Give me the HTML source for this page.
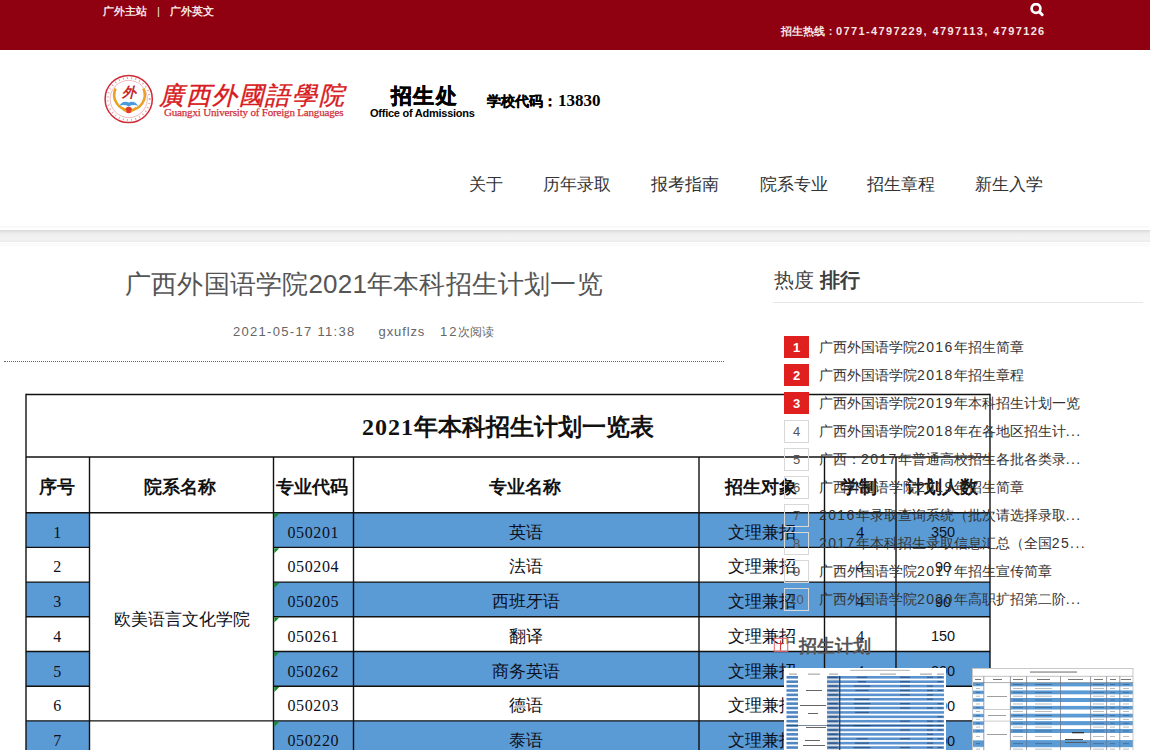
<!DOCTYPE html>
<html><head><meta charset="utf-8">
<style>
*{margin:0;padding:0;box-sizing:border-box}
html,body{width:1150px;height:750px;overflow:hidden;background:#fff;font-family:"Liberation Sans",sans-serif;color:#333}
.abs{position:absolute;white-space:nowrap}
#top{position:absolute;left:0;top:0;width:1150px;height:50px;background:#8f0010}
#band{position:absolute;left:0;top:230px;width:1150px;height:12px;background:linear-gradient(#dadada,#eeeeee 30%,#f3f3f3 75%,#ebebeb)}
#band:before{content:'';position:absolute;left:0;top:-4px;width:100%;height:2px;background:#fafafa}
#band:after{content:'';position:absolute;left:0;top:13px;width:100%;height:4px;background:linear-gradient(#fafafa,#fdfdfd)}
.nav{position:absolute;top:173.5px;font-size:17px;color:#333;line-height:22px;white-space:nowrap}
.rk{position:absolute;left:784px;width:25px;height:23px;border:1px solid #d8d8d8;font-size:13px;line-height:21px;text-align:center;color:#555}
.rk.red{background:#e01f1f;border-color:#e01f1f;color:#fff;height:22px;font-weight:bold}
.it{position:absolute;left:819px;height:22px;line-height:22px;font-size:14px;color:#333;white-space:nowrap}
.dg{letter-spacing:1.4px}
</style></head><body>
<div id="top"></div>
<div class="abs" style="left:103px;top:3.5px;font-size:11.3px;line-height:14px;color:#f4e6e6;font-weight:bold">广外主站<span style="display:inline-block;width:23px;text-align:center;font-weight:normal">|</span>广外英文</div>
<div class="abs" style="left:781px;top:24px;font-size:11px;line-height:14px;color:#f4e6e6;font-weight:bold"><span style="letter-spacing:0">招生热线</span><span style="letter-spacing:0;display:inline-block;width:11px;text-align:center">:</span><span style="letter-spacing:1.38px">0771-4797229, 4797113, 4797126</span></div>
<div id="band"></div>
<div class="nav" style="left:469px">关于</div>
<div class="nav" style="left:543px">历年录取</div>
<div class="nav" style="left:651px">报考指南</div>
<div class="nav" style="left:760px">院系专业</div>
<div class="nav" style="left:867px">招生章程</div>
<div class="nav" style="left:975px">新生入学</div>
<div class="abs" style="left:125px;top:267px;font-size:26px;line-height:34px;color:#555;letter-spacing:0.2px">广西外国语学院2021年本科招生计划一览</div>
<div class="abs" style="left:233px;top:322.5px;font-size:13px;line-height:18px;color:#666;letter-spacing:1.3px">2021-05-17 11:38</div>
<div class="abs" style="left:378.5px;top:322.5px;font-size:13px;line-height:18px;color:#666;letter-spacing:0.9px">gxuflzs</div>
<div class="abs" style="left:440px;top:322.5px;font-size:13px;line-height:18px;color:#666"><span style="letter-spacing:2px">12</span><span style="font-size:12px">次阅读</span></div>
<div class="abs" style="left:4px;top:361px;width:720px;height:1px;border-top:1px dotted #666"></div>
<svg class="abs" style="left:1029px;top:3px" width="16" height="14" viewBox="0 0 16 14"><circle cx="7" cy="5.5" r="4.4" fill="none" stroke="#fff" stroke-width="2.7"/><path d="M10.6 9.1l2.6 2.6" stroke="#fff" stroke-width="3" stroke-linecap="round"/></svg>
<svg class="abs" style="left:100px;top:70px" width="60" height="60" viewBox="100 70 60 60">
<circle cx="128.7" cy="99" r="23.6" fill="#fff" stroke="#cf2a35" stroke-width="1.5"/>
<circle cx="128.7" cy="99" r="18.6" fill="none" stroke="#e58a90" stroke-width="0.6"/>
<circle cx="128.7" cy="99" r="21" fill="none" stroke="#e8a0a6" stroke-width="2" stroke-dasharray="1 3.2"/>
<path d="M115.6 88.5 A15.3 15.3 0 1 0 143.4 88.5" fill="none" stroke="#e9a227" stroke-width="2.6"/>
<text x="129" y="97" text-anchor="middle" font-family="Liberation Serif" font-weight="bold" font-style="italic" font-size="14" fill="#c8282a">外</text>
<path d="M119 106 q4 -6 9.7 -3.5 q5.7 -2.5 9.7 3.5 q-5 -2 -9.7 0.5 q-4.7 -2.5 -9.7 -0.5z" fill="#4a9ae0"/>
<circle cx="128.7" cy="110" r="3.2" fill="#e03a2a"/>
<path d="M121.5 107.5 q3 4 5 3.5 M135.9 107.5 q-3 4 -5 3.5" stroke="#e8a020" stroke-width="1.6" fill="none"/>
</svg>
<div class="abs" style="left:159px;top:76.5px;font-size:25px;line-height:36px;color:#d81a22;font-weight:normal;font-style:italic;letter-spacing:1.6px;-webkit-text-stroke:0.4px #d81a22">廣西外國語學院</div>
<div class="abs" style="left:164px;top:106px;font-size:11px;line-height:13px;color:#d0303a;font-family:'Liberation Serif',serif;letter-spacing:-0.18px;-webkit-text-stroke:0.25px #d0303a">Guangxi University of Foreign Languages</div>
<div class="abs" style="left:391px;top:81.5px;font-size:21px;line-height:28px;color:#000;font-weight:bold;letter-spacing:1.3px;-webkit-text-stroke:0.5px #000">招生处</div>
<div class="abs" style="left:370px;top:107px;font-size:11px;line-height:13px;color:#000;font-weight:bold;letter-spacing:-0.25px">Office of Admissions</div>
<div class="abs" style="left:487px;top:91px;font-size:14px;line-height:20px;color:#000;font-weight:bold;-webkit-text-stroke:0.3px #000">学校代码：</div>
<div class="abs" style="left:558px;top:90.5px;font-size:17px;line-height:20px;color:#000;font-weight:bold;font-family:'Liberation Serif',serif">13830</div>
<svg class="abs" style="left:0;top:0" width="1150" height="750" viewBox="0 0 1150 750">
<rect x="26" y="512.7" width="63.5" height="34.7" fill="#5b9bd5"/>
<rect x="273.5" y="512.7" width="716.5" height="34.7" fill="#5b9bd5"/>
<rect x="26" y="582.1" width="63.5" height="34.7" fill="#5b9bd5"/>
<rect x="273.5" y="582.1" width="716.5" height="34.7" fill="#5b9bd5"/>
<rect x="26" y="651.5" width="63.5" height="34.7" fill="#5b9bd5"/>
<rect x="273.5" y="651.5" width="716.5" height="34.7" fill="#5b9bd5"/>
<rect x="26" y="720.9" width="63.5" height="34.7" fill="#5b9bd5"/>
<rect x="273.5" y="720.9" width="716.5" height="34.7" fill="#5b9bd5"/>
<line x1="26" y1="394.5" x2="990" y2="394.5" stroke="#111" stroke-width="1.4"/>
<line x1="26" y1="457.0" x2="990" y2="457.0" stroke="#111" stroke-width="1.4"/>
<line x1="26" y1="512.7" x2="990" y2="512.7" stroke="#111" stroke-width="1.4"/>
<line x1="26" y1="547.4" x2="89.5" y2="547.4" stroke="#111" stroke-width="1.4"/>
<line x1="273.5" y1="547.4" x2="990" y2="547.4" stroke="#111" stroke-width="1.4"/>
<line x1="26" y1="582.1" x2="89.5" y2="582.1" stroke="#111" stroke-width="1.4"/>
<line x1="273.5" y1="582.1" x2="990" y2="582.1" stroke="#111" stroke-width="1.4"/>
<line x1="26" y1="616.8" x2="89.5" y2="616.8" stroke="#111" stroke-width="1.4"/>
<line x1="273.5" y1="616.8" x2="990" y2="616.8" stroke="#111" stroke-width="1.4"/>
<line x1="26" y1="651.5" x2="89.5" y2="651.5" stroke="#111" stroke-width="1.4"/>
<line x1="273.5" y1="651.5" x2="990" y2="651.5" stroke="#111" stroke-width="1.4"/>
<line x1="26" y1="686.2" x2="89.5" y2="686.2" stroke="#111" stroke-width="1.4"/>
<line x1="273.5" y1="686.2" x2="990" y2="686.2" stroke="#111" stroke-width="1.4"/>
<line x1="26" y1="720.9" x2="990" y2="720.9" stroke="#111" stroke-width="1.4"/>
<line x1="26" y1="755.6" x2="89.5" y2="755.6" stroke="#111" stroke-width="1.4"/>
<line x1="273.5" y1="755.6" x2="990" y2="755.6" stroke="#111" stroke-width="1.4"/>
<line x1="26" y1="393.7" x2="26" y2="760.0" stroke="#111" stroke-width="1.4"/>
<line x1="990" y1="393.7" x2="990" y2="760.0" stroke="#111" stroke-width="1.4"/>
<line x1="89.5" y1="457.0" x2="89.5" y2="760.0" stroke="#111" stroke-width="1.4"/>
<line x1="273.5" y1="457.0" x2="273.5" y2="760.0" stroke="#111" stroke-width="1.4"/>
<line x1="353.5" y1="457.0" x2="353.5" y2="760.0" stroke="#111" stroke-width="1.4"/>
<line x1="699" y1="457.0" x2="699" y2="760.0" stroke="#111" stroke-width="1.4"/>
<line x1="824.5" y1="457.0" x2="824.5" y2="760.0" stroke="#111" stroke-width="1.4"/>
<line x1="896" y1="457.0" x2="896" y2="760.0" stroke="#111" stroke-width="1.4"/>
<path d="M274.3 513.5h5l-5 5z" fill="#1a8a2a"/>
<path d="M274.3 548.2h5l-5 5z" fill="#1a8a2a"/>
<path d="M274.3 582.9h5l-5 5z" fill="#1a8a2a"/>
<path d="M274.3 617.6h5l-5 5z" fill="#1a8a2a"/>
<path d="M274.3 652.3h5l-5 5z" fill="#1a8a2a"/>
<path d="M274.3 687.0h5l-5 5z" fill="#1a8a2a"/>
<path d="M274.3 721.7h5l-5 5z" fill="#1a8a2a"/>
<text x="508" y="434.8" text-anchor="middle" font-family="Liberation Serif" font-weight="bold" font-size="24" fill="#111"><tspan letter-spacing="1">2021</tspan>年本科招生计划一览表</text>
<text x="56.55" y="492.8" text-anchor="middle" font-family="Liberation Sans" font-weight="bold" font-size="17.6" fill="#111">序号</text>
<text x="180.3" y="492.8" text-anchor="middle" font-family="Liberation Sans" font-weight="bold" font-size="17.6" fill="#111">院系名称</text>
<text x="312.3" y="492.8" text-anchor="middle" font-family="Liberation Sans" font-weight="bold" font-size="17.6" fill="#111">专业代码</text>
<text x="525.05" y="492.8" text-anchor="middle" font-family="Liberation Sans" font-weight="bold" font-size="17.6" fill="#111">专业名称</text>
<text x="760.55" y="492.8" text-anchor="middle" font-family="Liberation Sans" font-weight="bold" font-size="17.6" fill="#111">招生对象</text>
<text x="859.05" y="492.8" text-anchor="middle" font-family="Liberation Sans" font-weight="bold" font-size="17.6" fill="#111">学制</text>
<text x="941.8" y="492.8" text-anchor="middle" font-family="Liberation Sans" font-weight="bold" font-size="17.6" fill="#111">计划人数</text>
<text x="57.25" y="537.7" text-anchor="middle" font-family="Liberation Serif" font-size="16" fill="#0d1020">1</text>
<text x="287.5" y="537.7" font-family="Liberation Serif" font-size="16" letter-spacing="0.6" fill="#0d1020">050201</text>
<text x="525.75" y="537.7" text-anchor="middle" font-family="Liberation Sans" font-size="17" fill="#0d1020">英语</text>
<text x="761.75" y="537.7" text-anchor="middle" font-family="Liberation Sans" font-size="17" fill="#0d1020">文理兼招</text>
<text x="860.25" y="537.7" text-anchor="middle" font-family="Liberation Serif" font-size="16" fill="#0d1020">4</text>
<text x="943.0" y="537.3" text-anchor="middle" font-family="Liberation Sans" font-size="14.5" fill="#0d1020">350</text>
<text x="57.25" y="572.4" text-anchor="middle" font-family="Liberation Serif" font-size="16" fill="#0d1020">2</text>
<text x="287.5" y="572.4" font-family="Liberation Serif" font-size="16" letter-spacing="0.6" fill="#0d1020">050204</text>
<text x="525.75" y="572.4" text-anchor="middle" font-family="Liberation Sans" font-size="17" fill="#0d1020">法语</text>
<text x="761.75" y="572.4" text-anchor="middle" font-family="Liberation Sans" font-size="17" fill="#0d1020">文理兼招</text>
<text x="860.25" y="572.4" text-anchor="middle" font-family="Liberation Serif" font-size="16" fill="#0d1020">4</text>
<text x="943.0" y="572.0" text-anchor="middle" font-family="Liberation Sans" font-size="14.5" fill="#0d1020">90</text>
<text x="57.25" y="607.1" text-anchor="middle" font-family="Liberation Serif" font-size="16" fill="#0d1020">3</text>
<text x="287.5" y="607.1" font-family="Liberation Serif" font-size="16" letter-spacing="0.6" fill="#0d1020">050205</text>
<text x="525.75" y="607.1" text-anchor="middle" font-family="Liberation Sans" font-size="17" fill="#0d1020">西班牙语</text>
<text x="761.75" y="607.1" text-anchor="middle" font-family="Liberation Sans" font-size="17" fill="#0d1020">文理兼招</text>
<text x="860.25" y="607.1" text-anchor="middle" font-family="Liberation Serif" font-size="16" fill="#0d1020">4</text>
<text x="943.0" y="606.7" text-anchor="middle" font-family="Liberation Sans" font-size="14.5" fill="#0d1020">90</text>
<text x="57.25" y="641.8" text-anchor="middle" font-family="Liberation Serif" font-size="16" fill="#0d1020">4</text>
<text x="287.5" y="641.8" font-family="Liberation Serif" font-size="16" letter-spacing="0.6" fill="#0d1020">050261</text>
<text x="525.75" y="641.8" text-anchor="middle" font-family="Liberation Sans" font-size="17" fill="#0d1020">翻译</text>
<text x="761.75" y="641.8" text-anchor="middle" font-family="Liberation Sans" font-size="17" fill="#0d1020">文理兼招</text>
<text x="860.25" y="641.8" text-anchor="middle" font-family="Liberation Serif" font-size="16" fill="#0d1020">4</text>
<text x="943.0" y="641.4" text-anchor="middle" font-family="Liberation Sans" font-size="14.5" fill="#0d1020">150</text>
<text x="57.25" y="676.5" text-anchor="middle" font-family="Liberation Serif" font-size="16" fill="#0d1020">5</text>
<text x="287.5" y="676.5" font-family="Liberation Serif" font-size="16" letter-spacing="0.6" fill="#0d1020">050262</text>
<text x="525.75" y="676.5" text-anchor="middle" font-family="Liberation Sans" font-size="17" fill="#0d1020">商务英语</text>
<text x="761.75" y="676.5" text-anchor="middle" font-family="Liberation Sans" font-size="17" fill="#0d1020">文理兼招</text>
<text x="860.25" y="676.5" text-anchor="middle" font-family="Liberation Serif" font-size="16" fill="#0d1020">4</text>
<text x="943.0" y="676.1" text-anchor="middle" font-family="Liberation Sans" font-size="14.5" fill="#0d1020">200</text>
<text x="57.25" y="711.2" text-anchor="middle" font-family="Liberation Serif" font-size="16" fill="#0d1020">6</text>
<text x="287.5" y="711.2" font-family="Liberation Serif" font-size="16" letter-spacing="0.6" fill="#0d1020">050203</text>
<text x="525.75" y="711.2" text-anchor="middle" font-family="Liberation Sans" font-size="17" fill="#0d1020">德语</text>
<text x="761.75" y="711.2" text-anchor="middle" font-family="Liberation Sans" font-size="17" fill="#0d1020">文理兼招</text>
<text x="860.25" y="711.2" text-anchor="middle" font-family="Liberation Serif" font-size="16" fill="#0d1020">4</text>
<text x="943.0" y="710.8" text-anchor="middle" font-family="Liberation Sans" font-size="14.5" fill="#0d1020">100</text>
<text x="57.25" y="745.9" text-anchor="middle" font-family="Liberation Serif" font-size="16" fill="#0d1020">7</text>
<text x="287.5" y="745.9" font-family="Liberation Serif" font-size="16" letter-spacing="0.6" fill="#0d1020">050220</text>
<text x="525.75" y="745.9" text-anchor="middle" font-family="Liberation Sans" font-size="17" fill="#0d1020">泰语</text>
<text x="761.75" y="745.9" text-anchor="middle" font-family="Liberation Sans" font-size="17" fill="#0d1020">文理兼招</text>
<text x="860.25" y="745.9" text-anchor="middle" font-family="Liberation Serif" font-size="16" fill="#0d1020">4</text>
<text x="943.0" y="745.5" text-anchor="middle" font-family="Liberation Sans" font-size="14.5" fill="#0d1020">100</text>
<text x="181.5" y="624.8" text-anchor="middle" font-family="Liberation Sans" font-size="17" fill="#0d1020">欧美语言文化学院</text>
</svg>
<div class="abs" style="left:774px;top:266px;font-size:20px;line-height:28px;color:#444">热度 <b style="color:#3e3e3e">排行</b></div>
<div class="abs" style="left:773px;top:302px;width:370px;height:1px;background:#e6e6e6"></div>
<div class="rk red" style="top:336px">1</div>
<div class="it" style="top:336px">广西外国语学院<span class="dg">2016</span>年招生简章</div>
<div class="rk red" style="top:364px">2</div>
<div class="it" style="top:364px">广西外国语学院<span class="dg">2018</span>年招生章程</div>
<div class="rk red" style="top:392px">3</div>
<div class="it" style="top:392px">广西外国语学院<span class="dg">2019</span>年本科招生计划一览</div>
<div class="rk" style="top:420px">4</div>
<div class="it" style="top:420px">广西外国语学院<span class="dg">2018</span>年在各地区招生计<span class="dg">...</span></div>
<div class="rk" style="top:448px">5</div>
<div class="it" style="top:448px">广西：<span class="dg">2017</span>年普通高校招生各批各类录<span class="dg">...</span></div>
<div class="rk" style="top:476px">6</div>
<div class="it" style="top:476px">广西外国语学院<span class="dg">2019</span>年招生简章</div>
<div class="rk" style="top:504px">7</div>
<div class="it" style="top:504px"><span class="dg">2016</span>年录取查询系统（批次请选择录取<span class="dg">...</span></div>
<div class="rk" style="top:532px">8</div>
<div class="it" style="top:532px"><span class="dg">2017</span>年本科招生录取信息汇总（全国<span class="dg">25...</span></div>
<div class="rk" style="top:560px">9</div>
<div class="it" style="top:560px">广西外国语学院<span class="dg">2017</span>年招生宣传简章</div>
<div class="rk" style="top:588px">10</div>
<div class="it" style="top:588px">广西外国语学院<span class="dg">2020</span>年高职扩招第二阶<span class="dg">...</span></div>
<svg class="abs" style="left:773px;top:637px" width="16" height="16" viewBox="0 0 16 16"><rect x="1.3" y="1.3" width="13.4" height="13" fill="none" stroke="#e66a70" stroke-width="1.1"/><path d="M7.5 3.5v10M4 6.5h7" stroke="#d83838" stroke-width="1.1"/></svg>
<div class="abs" style="left:799px;top:634px;font-size:18px;line-height:24px;color:#555;font-weight:bold">招生计划</div>
<svg class="abs" style="left:784px;top:668px" width="162" height="82" viewBox="784 668 162 82">
<rect x="784" y="668" width="162" height="82" fill="#fff"/>
<rect x="850" y="669.8" width="60" height="1.1" fill="#bbb"/>
<rect x="789" y="673.6" width="8" height="1" fill="#999"/>
<rect x="808" y="673.6" width="12" height="1" fill="#999"/>
<rect x="829" y="673.6" width="9" height="1" fill="#999"/>
<rect x="880" y="673.6" width="16" height="1" fill="#999"/>
<rect x="920" y="673.6" width="12" height="1" fill="#999"/>
<rect x="937" y="673.6" width="7" height="1" fill="#999"/>
<rect x="786.5" y="676.00" width="11.5" height="2.6" fill="#4f86c2"/>
<rect x="827" y="676.00" width="117" height="2.6" fill="#5a92cf"/>
<rect x="828.5" y="676.70" width="9.0" height="1.2" fill="#1c3050" opacity="0.55"/>
<rect x="856.8" y="676.70" width="10.4" height="1.2" fill="#1c3050" opacity="0.55"/>
<rect x="900.0" y="676.70" width="10.0" height="1.2" fill="#1c3050" opacity="0.55"/>
<rect x="927.0" y="676.70" width="6.0" height="1.2" fill="#1c3050" opacity="0.55"/>
<rect x="937.5" y="676.70" width="5.0" height="1.2" fill="#1c3050" opacity="0.55"/>
<rect x="786.5" y="680.39" width="11.5" height="2.6" fill="#4f86c2"/>
<rect x="827" y="680.39" width="117" height="2.6" fill="#5a92cf"/>
<rect x="857.9" y="681.09" width="8.1" height="1.2" fill="#1c3050" opacity="0.55"/>
<rect x="900.0" y="681.09" width="10.0" height="1.2" fill="#1c3050" opacity="0.55"/>
<rect x="937.5" y="681.09" width="5.0" height="1.2" fill="#1c3050" opacity="0.55"/>
<rect x="786.5" y="684.78" width="11.5" height="2.6" fill="#4f86c2"/>
<rect x="827" y="684.78" width="117" height="2.6" fill="#5a92cf"/>
<rect x="828.5" y="685.48" width="9.0" height="1.2" fill="#1c3050" opacity="0.55"/>
<rect x="853.8" y="685.48" width="16.4" height="1.2" fill="#1c3050" opacity="0.55"/>
<rect x="900.0" y="685.48" width="10.0" height="1.2" fill="#1c3050" opacity="0.55"/>
<rect x="927.0" y="685.48" width="6.0" height="1.2" fill="#1c3050" opacity="0.55"/>
<rect x="786.5" y="689.17" width="11.5" height="2.6" fill="#4f86c2"/>
<rect x="827" y="689.17" width="117" height="2.6" fill="#5a92cf"/>
<rect x="828.5" y="689.87" width="9.0" height="1.2" fill="#1c3050" opacity="0.55"/>
<rect x="855.4" y="689.87" width="13.2" height="1.2" fill="#1c3050" opacity="0.55"/>
<rect x="900.0" y="689.87" width="10.0" height="1.2" fill="#1c3050" opacity="0.55"/>
<rect x="927.0" y="689.87" width="6.0" height="1.2" fill="#1c3050" opacity="0.55"/>
<rect x="937.5" y="689.87" width="5.0" height="1.2" fill="#1c3050" opacity="0.55"/>
<rect x="786.5" y="693.56" width="11.5" height="2.6" fill="#4f86c2"/>
<rect x="827" y="693.56" width="117" height="2.6" fill="#5a92cf"/>
<rect x="828.5" y="694.26" width="9.0" height="1.2" fill="#1c3050" opacity="0.55"/>
<rect x="900.0" y="694.26" width="10.0" height="1.2" fill="#1c3050" opacity="0.55"/>
<rect x="927.0" y="694.26" width="6.0" height="1.2" fill="#1c3050" opacity="0.55"/>
<rect x="786.5" y="697.95" width="11.5" height="2.6" fill="#4f86c2"/>
<rect x="827" y="697.95" width="117" height="2.6" fill="#5a92cf"/>
<rect x="854.4" y="698.65" width="15.1" height="1.2" fill="#1c3050" opacity="0.55"/>
<rect x="927.0" y="698.65" width="6.0" height="1.2" fill="#1c3050" opacity="0.55"/>
<rect x="786.5" y="702.34" width="11.5" height="2.6" fill="#4f86c2"/>
<rect x="827" y="702.34" width="117" height="2.6" fill="#5a92cf"/>
<rect x="828.5" y="703.04" width="9.0" height="1.2" fill="#1c3050" opacity="0.55"/>
<rect x="853.6" y="703.04" width="16.8" height="1.2" fill="#1c3050" opacity="0.55"/>
<rect x="900.0" y="703.04" width="10.0" height="1.2" fill="#1c3050" opacity="0.55"/>
<rect x="937.5" y="703.04" width="5.0" height="1.2" fill="#1c3050" opacity="0.55"/>
<rect x="786.5" y="706.73" width="11.5" height="2.6" fill="#4f86c2"/>
<rect x="827" y="706.73" width="117" height="2.6" fill="#5a92cf"/>
<rect x="828.5" y="707.43" width="9.0" height="1.2" fill="#1c3050" opacity="0.55"/>
<rect x="854.9" y="707.43" width="14.3" height="1.2" fill="#1c3050" opacity="0.55"/>
<rect x="900.0" y="707.43" width="10.0" height="1.2" fill="#1c3050" opacity="0.55"/>
<rect x="927.0" y="707.43" width="6.0" height="1.2" fill="#1c3050" opacity="0.55"/>
<rect x="937.5" y="707.43" width="5.0" height="1.2" fill="#1c3050" opacity="0.55"/>
<rect x="786.5" y="711.12" width="11.5" height="2.6" fill="#4f86c2"/>
<rect x="827" y="711.12" width="117" height="2.6" fill="#5a92cf"/>
<rect x="855.1" y="711.82" width="13.8" height="1.2" fill="#1c3050" opacity="0.55"/>
<rect x="786.5" y="715.51" width="11.5" height="2.6" fill="#4f86c2"/>
<rect x="827" y="715.51" width="117" height="2.6" fill="#5a92cf"/>
<rect x="828.5" y="716.21" width="9.0" height="1.2" fill="#1c3050" opacity="0.55"/>
<rect x="937.5" y="716.21" width="5.0" height="1.2" fill="#1c3050" opacity="0.55"/>
<rect x="786.5" y="719.90" width="11.5" height="2.6" fill="#4f86c2"/>
<rect x="827" y="719.90" width="117" height="2.6" fill="#5a92cf"/>
<rect x="828.5" y="720.60" width="9.0" height="1.2" fill="#1c3050" opacity="0.55"/>
<rect x="900.0" y="720.60" width="10.0" height="1.2" fill="#1c3050" opacity="0.55"/>
<rect x="927.0" y="720.60" width="6.0" height="1.2" fill="#1c3050" opacity="0.55"/>
<rect x="937.5" y="720.60" width="5.0" height="1.2" fill="#1c3050" opacity="0.55"/>
<rect x="786.5" y="724.29" width="11.5" height="2.6" fill="#4f86c2"/>
<rect x="827" y="724.29" width="117" height="2.6" fill="#5a92cf"/>
<rect x="853.7" y="724.99" width="16.5" height="1.2" fill="#1c3050" opacity="0.55"/>
<rect x="927.0" y="724.99" width="6.0" height="1.2" fill="#1c3050" opacity="0.55"/>
<rect x="937.5" y="724.99" width="5.0" height="1.2" fill="#1c3050" opacity="0.55"/>
<rect x="786.5" y="728.68" width="11.5" height="2.6" fill="#4f86c2"/>
<rect x="827" y="728.68" width="117" height="2.6" fill="#5a92cf"/>
<rect x="828.5" y="729.38" width="9.0" height="1.2" fill="#1c3050" opacity="0.55"/>
<rect x="900.0" y="729.38" width="10.0" height="1.2" fill="#1c3050" opacity="0.55"/>
<rect x="927.0" y="729.38" width="6.0" height="1.2" fill="#1c3050" opacity="0.55"/>
<rect x="937.5" y="729.38" width="5.0" height="1.2" fill="#1c3050" opacity="0.55"/>
<rect x="786.5" y="733.07" width="11.5" height="2.6" fill="#4f86c2"/>
<rect x="827" y="733.07" width="117" height="2.6" fill="#5a92cf"/>
<rect x="828.5" y="733.77" width="9.0" height="1.2" fill="#1c3050" opacity="0.55"/>
<rect x="927.0" y="733.77" width="6.0" height="1.2" fill="#1c3050" opacity="0.55"/>
<rect x="786.5" y="737.46" width="11.5" height="2.6" fill="#4f86c2"/>
<rect x="827" y="737.46" width="117" height="2.6" fill="#5a92cf"/>
<rect x="828.5" y="738.16" width="9.0" height="1.2" fill="#1c3050" opacity="0.55"/>
<rect x="856.5" y="738.16" width="11.1" height="1.2" fill="#1c3050" opacity="0.55"/>
<rect x="900.0" y="738.16" width="10.0" height="1.2" fill="#1c3050" opacity="0.55"/>
<rect x="927.0" y="738.16" width="6.0" height="1.2" fill="#1c3050" opacity="0.55"/>
<rect x="937.5" y="738.16" width="5.0" height="1.2" fill="#1c3050" opacity="0.55"/>
<rect x="786.5" y="741.85" width="11.5" height="2.6" fill="#4f86c2"/>
<rect x="827" y="741.85" width="117" height="2.6" fill="#5a92cf"/>
<rect x="828.5" y="742.55" width="9.0" height="1.2" fill="#1c3050" opacity="0.55"/>
<rect x="854.9" y="742.55" width="14.1" height="1.2" fill="#1c3050" opacity="0.55"/>
<rect x="927.0" y="742.55" width="6.0" height="1.2" fill="#1c3050" opacity="0.55"/>
<rect x="786.5" y="746.24" width="11.5" height="2.6" fill="#4f86c2"/>
<rect x="827" y="746.24" width="117" height="2.6" fill="#5a92cf"/>
<rect x="828.5" y="746.94" width="9.0" height="1.2" fill="#1c3050" opacity="0.55"/>
<rect x="853.5" y="746.94" width="17.0" height="1.2" fill="#1c3050" opacity="0.55"/>
<rect x="900.0" y="746.94" width="10.0" height="1.2" fill="#1c3050" opacity="0.55"/>
<rect x="927.0" y="746.94" width="6.0" height="1.2" fill="#1c3050" opacity="0.55"/>
<rect x="937.5" y="746.94" width="5.0" height="1.2" fill="#1c3050" opacity="0.55"/>
<rect x="786.5" y="750.63" width="11.5" height="2.6" fill="#4f86c2"/>
<rect x="827" y="750.63" width="117" height="2.6" fill="#5a92cf"/>
<rect x="828.5" y="751.33" width="9.0" height="1.2" fill="#1c3050" opacity="0.55"/>
<rect x="900.0" y="751.33" width="10.0" height="1.2" fill="#1c3050" opacity="0.55"/>
<rect x="927.0" y="751.33" width="6.0" height="1.2" fill="#1c3050" opacity="0.55"/>
<rect x="937.5" y="751.33" width="5.0" height="1.2" fill="#1c3050" opacity="0.55"/>
<rect x="839" y="676" width="1.4" height="74" fill="#24344e" opacity="0.85"/>
<rect x="827" y="676" width="13" height="74" fill="#203050" opacity="0.15"/>
<rect x="806" y="690" width="16" height="0.9" fill="#555"/>
<rect x="800" y="705" width="26" height="0.9" fill="#555"/>
<rect x="808" y="713" width="10" height="0.9" fill="#555"/>
<rect x="806" y="727" width="20" height="0.9" fill="#555"/>
<rect x="805" y="740" width="15" height="0.9" fill="#555"/>
<rect x="803" y="745" width="22" height="0.9" fill="#555"/>
<rect x="786" y="725" width="158" height="1" fill="#1e3a5a" opacity="0.6"/>
</svg>
<svg class="abs" style="left:972px;top:668px" width="162" height="82" viewBox="972 668 162 82">
<rect x="972" y="668" width="161.5" height="82" fill="#fff"/>
<rect x="973" y="682.6" width="10.8" height="3.8" fill="#5b9bd5"/>
<rect x="1010.4" y="682.6" width="122.6" height="3.8" fill="#5b9bd5"/>
<rect x="973" y="690.4" width="10.8" height="3.9" fill="#5b9bd5"/>
<rect x="1010.4" y="690.4" width="122.6" height="3.9" fill="#5b9bd5"/>
<rect x="973" y="698" width="10.8" height="4.0" fill="#5b9bd5"/>
<rect x="1010.4" y="698" width="122.6" height="4.0" fill="#5b9bd5"/>
<rect x="973" y="705.9" width="10.8" height="3.6" fill="#5b9bd5"/>
<rect x="1010.4" y="705.9" width="122.6" height="3.6" fill="#5b9bd5"/>
<rect x="973" y="713.7" width="10.8" height="3.8" fill="#5b9bd5"/>
<rect x="1010.4" y="713.7" width="122.6" height="3.8" fill="#5b9bd5"/>
<rect x="973" y="721.1" width="10.8" height="4.1" fill="#5b9bd5"/>
<rect x="1010.4" y="721.1" width="122.6" height="4.1" fill="#5b9bd5"/>
<rect x="973" y="729" width="10.8" height="4.0" fill="#5b9bd5"/>
<rect x="1010.4" y="729" width="122.6" height="4.0" fill="#5b9bd5"/>
<rect x="973" y="740.1" width="10.8" height="7.1" fill="#5b9bd5"/>
<rect x="1010.4" y="740.1" width="122.6" height="7.1" fill="#5b9bd5"/>
<rect x="972.5" y="668.5" width="160.5" height="90" fill="none" stroke="#bbb" stroke-width="0.8"/>
<line x1="973" y1="676.3" x2="1133" y2="676.3" stroke="#999" stroke-width="0.6"/>
<line x1="973" y1="682.6" x2="1133" y2="682.6" stroke="#777" stroke-width="0.6"/>
<line x1="983.8" y1="676.3" x2="983.8" y2="750" stroke="#6a7080" stroke-width="0.7"/>
<line x1="1010.4" y1="676.3" x2="1010.4" y2="750" stroke="#6a7080" stroke-width="0.7"/>
<line x1="1026.6" y1="676.3" x2="1026.6" y2="750" stroke="#6a7080" stroke-width="0.7"/>
<line x1="1060.5" y1="676.3" x2="1060.5" y2="750" stroke="#6a7080" stroke-width="0.7"/>
<line x1="1090.6" y1="676.3" x2="1090.6" y2="750" stroke="#6a7080" stroke-width="0.7"/>
<line x1="1106.6" y1="676.3" x2="1106.6" y2="750" stroke="#6a7080" stroke-width="0.7"/>
<line x1="1119.8" y1="676.3" x2="1119.8" y2="750" stroke="#6a7080" stroke-width="0.7"/>
<line x1="973" y1="686.4" x2="983.8" y2="686.4" stroke="#fff" stroke-width="0.5"/>
<line x1="973" y1="690.4" x2="983.8" y2="690.4" stroke="#fff" stroke-width="0.5"/>
<line x1="973" y1="694.3" x2="983.8" y2="694.3" stroke="#fff" stroke-width="0.5"/>
<line x1="973" y1="698" x2="983.8" y2="698" stroke="#fff" stroke-width="0.5"/>
<line x1="973" y1="702" x2="983.8" y2="702" stroke="#fff" stroke-width="0.5"/>
<line x1="973" y1="705.9" x2="983.8" y2="705.9" stroke="#fff" stroke-width="0.5"/>
<line x1="973" y1="709.5" x2="983.8" y2="709.5" stroke="#fff" stroke-width="0.5"/>
<line x1="973" y1="713.7" x2="983.8" y2="713.7" stroke="#fff" stroke-width="0.5"/>
<line x1="973" y1="717.5" x2="983.8" y2="717.5" stroke="#fff" stroke-width="0.5"/>
<line x1="973" y1="721.1" x2="983.8" y2="721.1" stroke="#fff" stroke-width="0.5"/>
<line x1="973" y1="725.2" x2="983.8" y2="725.2" stroke="#fff" stroke-width="0.5"/>
<line x1="973" y1="729" x2="983.8" y2="729" stroke="#fff" stroke-width="0.5"/>
<line x1="973" y1="733" x2="983.8" y2="733" stroke="#fff" stroke-width="0.5"/>
<line x1="973" y1="740.1" x2="983.8" y2="740.1" stroke="#fff" stroke-width="0.5"/>
<line x1="973" y1="747.2" x2="983.8" y2="747.2" stroke="#fff" stroke-width="0.5"/>
<line x1="973" y1="751" x2="983.8" y2="751" stroke="#fff" stroke-width="0.5"/>
<line x1="983.8" y1="709.5" x2="1010.4" y2="709.5" stroke="#aaa" stroke-width="0.6"/>
<line x1="983.8" y1="721.1" x2="1010.4" y2="721.1" stroke="#aaa" stroke-width="0.6"/>
<rect x="1030" y="671.5" width="47" height="1.1" fill="#777"/>
<rect x="975" y="679" width="6" height="1" fill="#777"/>
<rect x="993" y="679" width="9" height="1" fill="#777"/>
<rect x="1013" y="679" width="10" height="1" fill="#777"/>
<rect x="1037" y="679" width="13" height="1" fill="#777"/>
<rect x="1068" y="679" width="15" height="1" fill="#777"/>
<rect x="1094" y="679" width="9" height="1" fill="#777"/>
<rect x="1110" y="679" width="6" height="1" fill="#777"/>
<rect x="1121" y="679" width="10" height="1" fill="#777"/>
<rect x="976" y="684.1" width="4" height="0.8" fill="#3a5a80" opacity="0.8"/>
<rect x="1013" y="684.1" width="10" height="0.8" fill="#3a5a80" opacity="0.8"/>
<rect x="1035" y="684.1" width="17" height="0.8" fill="#3a5a80" opacity="0.8"/>
<rect x="1093" y="684.1" width="11" height="0.8" fill="#3a5a80" opacity="0.8"/>
<rect x="1110" y="684.1" width="5" height="0.8" fill="#3a5a80" opacity="0.8"/>
<rect x="1123" y="684.1" width="6" height="0.8" fill="#3a5a80" opacity="0.8"/>
<rect x="976" y="688.0" width="4" height="0.8" fill="#999" opacity="0.8"/>
<rect x="1013" y="688.0" width="10" height="0.8" fill="#999" opacity="0.8"/>
<rect x="1035" y="688.0" width="17" height="0.8" fill="#999" opacity="0.8"/>
<rect x="1093" y="688.0" width="11" height="0.8" fill="#999" opacity="0.8"/>
<rect x="1110" y="688.0" width="5" height="0.8" fill="#999" opacity="0.8"/>
<rect x="1123" y="688.0" width="6" height="0.8" fill="#999" opacity="0.8"/>
<rect x="976" y="691.9" width="4" height="0.8" fill="#3a5a80" opacity="0.8"/>
<rect x="1013" y="691.9" width="10" height="0.8" fill="#3a5a80" opacity="0.8"/>
<rect x="1035" y="691.9" width="17" height="0.8" fill="#3a5a80" opacity="0.8"/>
<rect x="1093" y="691.9" width="11" height="0.8" fill="#3a5a80" opacity="0.8"/>
<rect x="1110" y="691.9" width="5" height="0.8" fill="#3a5a80" opacity="0.8"/>
<rect x="1123" y="691.9" width="6" height="0.8" fill="#3a5a80" opacity="0.8"/>
<rect x="976" y="695.8" width="4" height="0.8" fill="#999" opacity="0.8"/>
<rect x="1013" y="695.8" width="10" height="0.8" fill="#999" opacity="0.8"/>
<rect x="1035" y="695.8" width="17" height="0.8" fill="#999" opacity="0.8"/>
<rect x="1093" y="695.8" width="11" height="0.8" fill="#999" opacity="0.8"/>
<rect x="1110" y="695.8" width="5" height="0.8" fill="#999" opacity="0.8"/>
<rect x="1123" y="695.8" width="6" height="0.8" fill="#999" opacity="0.8"/>
<rect x="976" y="699.6" width="4" height="0.8" fill="#3a5a80" opacity="0.8"/>
<rect x="1013" y="699.6" width="10" height="0.8" fill="#3a5a80" opacity="0.8"/>
<rect x="1035" y="699.6" width="17" height="0.8" fill="#3a5a80" opacity="0.8"/>
<rect x="1093" y="699.6" width="11" height="0.8" fill="#3a5a80" opacity="0.8"/>
<rect x="1110" y="699.6" width="5" height="0.8" fill="#3a5a80" opacity="0.8"/>
<rect x="1123" y="699.6" width="6" height="0.8" fill="#3a5a80" opacity="0.8"/>
<rect x="976" y="703.6" width="4" height="0.8" fill="#999" opacity="0.8"/>
<rect x="1013" y="703.6" width="10" height="0.8" fill="#999" opacity="0.8"/>
<rect x="1035" y="703.6" width="17" height="0.8" fill="#999" opacity="0.8"/>
<rect x="1093" y="703.6" width="11" height="0.8" fill="#999" opacity="0.8"/>
<rect x="1110" y="703.6" width="5" height="0.8" fill="#999" opacity="0.8"/>
<rect x="1123" y="703.6" width="6" height="0.8" fill="#999" opacity="0.8"/>
<rect x="976" y="707.3" width="4" height="0.8" fill="#3a5a80" opacity="0.8"/>
<rect x="1013" y="707.3" width="10" height="0.8" fill="#3a5a80" opacity="0.8"/>
<rect x="1035" y="707.3" width="17" height="0.8" fill="#3a5a80" opacity="0.8"/>
<rect x="1093" y="707.3" width="11" height="0.8" fill="#3a5a80" opacity="0.8"/>
<rect x="1110" y="707.3" width="5" height="0.8" fill="#3a5a80" opacity="0.8"/>
<rect x="1123" y="707.3" width="6" height="0.8" fill="#3a5a80" opacity="0.8"/>
<rect x="976" y="711.2" width="4" height="0.8" fill="#999" opacity="0.8"/>
<rect x="1013" y="711.2" width="10" height="0.8" fill="#999" opacity="0.8"/>
<rect x="1035" y="711.2" width="17" height="0.8" fill="#999" opacity="0.8"/>
<rect x="1093" y="711.2" width="11" height="0.8" fill="#999" opacity="0.8"/>
<rect x="1110" y="711.2" width="5" height="0.8" fill="#999" opacity="0.8"/>
<rect x="1123" y="711.2" width="6" height="0.8" fill="#999" opacity="0.8"/>
<rect x="976" y="715.2" width="4" height="0.8" fill="#3a5a80" opacity="0.8"/>
<rect x="1013" y="715.2" width="10" height="0.8" fill="#3a5a80" opacity="0.8"/>
<rect x="1035" y="715.2" width="17" height="0.8" fill="#3a5a80" opacity="0.8"/>
<rect x="1093" y="715.2" width="11" height="0.8" fill="#3a5a80" opacity="0.8"/>
<rect x="1110" y="715.2" width="5" height="0.8" fill="#3a5a80" opacity="0.8"/>
<rect x="1123" y="715.2" width="6" height="0.8" fill="#3a5a80" opacity="0.8"/>
<rect x="976" y="718.9" width="4" height="0.8" fill="#999" opacity="0.8"/>
<rect x="1013" y="718.9" width="10" height="0.8" fill="#999" opacity="0.8"/>
<rect x="1035" y="718.9" width="17" height="0.8" fill="#999" opacity="0.8"/>
<rect x="1093" y="718.9" width="11" height="0.8" fill="#999" opacity="0.8"/>
<rect x="1110" y="718.9" width="5" height="0.8" fill="#999" opacity="0.8"/>
<rect x="1123" y="718.9" width="6" height="0.8" fill="#999" opacity="0.8"/>
<rect x="976" y="722.8" width="4" height="0.8" fill="#3a5a80" opacity="0.8"/>
<rect x="1013" y="722.8" width="10" height="0.8" fill="#3a5a80" opacity="0.8"/>
<rect x="1035" y="722.8" width="17" height="0.8" fill="#3a5a80" opacity="0.8"/>
<rect x="1093" y="722.8" width="11" height="0.8" fill="#3a5a80" opacity="0.8"/>
<rect x="1110" y="722.8" width="5" height="0.8" fill="#3a5a80" opacity="0.8"/>
<rect x="1123" y="722.8" width="6" height="0.8" fill="#3a5a80" opacity="0.8"/>
<rect x="976" y="726.7" width="4" height="0.8" fill="#999" opacity="0.8"/>
<rect x="1013" y="726.7" width="10" height="0.8" fill="#999" opacity="0.8"/>
<rect x="1035" y="726.7" width="17" height="0.8" fill="#999" opacity="0.8"/>
<rect x="1093" y="726.7" width="11" height="0.8" fill="#999" opacity="0.8"/>
<rect x="1110" y="726.7" width="5" height="0.8" fill="#999" opacity="0.8"/>
<rect x="1123" y="726.7" width="6" height="0.8" fill="#999" opacity="0.8"/>
<rect x="976" y="730.6" width="4" height="0.8" fill="#3a5a80" opacity="0.8"/>
<rect x="1013" y="730.6" width="10" height="0.8" fill="#3a5a80" opacity="0.8"/>
<rect x="1035" y="730.6" width="17" height="0.8" fill="#3a5a80" opacity="0.8"/>
<rect x="1093" y="730.6" width="11" height="0.8" fill="#3a5a80" opacity="0.8"/>
<rect x="1110" y="730.6" width="5" height="0.8" fill="#3a5a80" opacity="0.8"/>
<rect x="1123" y="730.6" width="6" height="0.8" fill="#3a5a80" opacity="0.8"/>
<rect x="976" y="736.1" width="4" height="0.8" fill="#999" opacity="0.8"/>
<rect x="1013" y="736.1" width="10" height="0.8" fill="#999" opacity="0.8"/>
<rect x="1035" y="736.1" width="17" height="0.8" fill="#999" opacity="0.8"/>
<rect x="1093" y="736.1" width="11" height="0.8" fill="#999" opacity="0.8"/>
<rect x="1110" y="736.1" width="5" height="0.8" fill="#999" opacity="0.8"/>
<rect x="1123" y="736.1" width="6" height="0.8" fill="#999" opacity="0.8"/>
<rect x="976" y="743.3" width="4" height="0.8" fill="#3a5a80" opacity="0.8"/>
<rect x="1013" y="743.3" width="10" height="0.8" fill="#3a5a80" opacity="0.8"/>
<rect x="1035" y="743.3" width="17" height="0.8" fill="#3a5a80" opacity="0.8"/>
<rect x="1093" y="743.3" width="11" height="0.8" fill="#3a5a80" opacity="0.8"/>
<rect x="1110" y="743.3" width="5" height="0.8" fill="#3a5a80" opacity="0.8"/>
<rect x="1123" y="743.3" width="6" height="0.8" fill="#3a5a80" opacity="0.8"/>
<rect x="976" y="748.7" width="4" height="0.8" fill="#999" opacity="0.8"/>
<rect x="1013" y="748.7" width="10" height="0.8" fill="#999" opacity="0.8"/>
<rect x="1035" y="748.7" width="17" height="0.8" fill="#999" opacity="0.8"/>
<rect x="1093" y="748.7" width="11" height="0.8" fill="#999" opacity="0.8"/>
<rect x="1110" y="748.7" width="5" height="0.8" fill="#999" opacity="0.8"/>
<rect x="1123" y="748.7" width="6" height="0.8" fill="#999" opacity="0.8"/>
<rect x="987" y="696" width="20" height="0.8" fill="#888"/>
<rect x="988" y="715" width="18" height="0.8" fill="#888"/>
<rect x="987" y="734" width="20" height="0.8" fill="#888"/>
<rect x="1072" y="732" width="12" height="1.3" fill="#333"/>
<rect x="1065" y="739" width="18" height="1.1" fill="#444"/><rect x="1065" y="742" width="22" height="0.9" fill="#555"/>
</svg>
</body></html>
